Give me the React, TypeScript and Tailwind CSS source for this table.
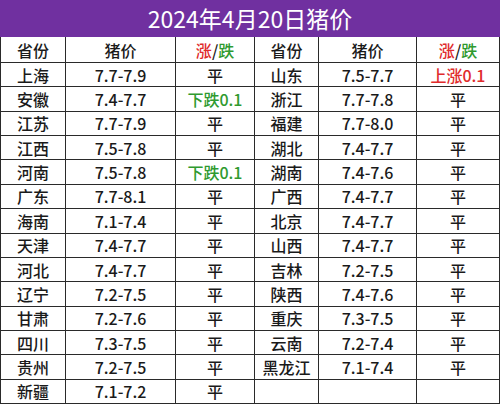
import React from 'react';

type Row = { province: string; price: string; change: string };

const left: Row[] = [
  { province: '上海', price: '7.7-7.9', change: '平' },
  { province: '安徽', price: '7.4-7.7', change: '下跌0.1' },
  { province: '江苏', price: '7.7-7.9', change: '平' },
  { province: '江西', price: '7.5-7.8', change: '平' },
  { province: '河南', price: '7.5-7.8', change: '下跌0.1' },
  { province: '广东', price: '7.7-8.1', change: '平' },
  { province: '海南', price: '7.1-7.4', change: '平' },
  { province: '天津', price: '7.4-7.7', change: '平' },
  { province: '河北', price: '7.4-7.7', change: '平' },
  { province: '辽宁', price: '7.2-7.5', change: '平' },
  { province: '甘肃', price: '7.2-7.6', change: '平' },
  { province: '四川', price: '7.3-7.5', change: '平' },
  { province: '贵州', price: '7.2-7.5', change: '平' },
  { province: '新疆', price: '7.1-7.2', change: '平' },
];

const right: Row[] = [
  { province: '山东', price: '7.5-7.7', change: '上涨0.1' },
  { province: '浙江', price: '7.7-7.8', change: '平' },
  { province: '福建', price: '7.7-8.0', change: '平' },
  { province: '湖北', price: '7.4-7.7', change: '平' },
  { province: '湖南', price: '7.4-7.6', change: '平' },
  { province: '广西', price: '7.4-7.7', change: '平' },
  { province: '北京', price: '7.4-7.7', change: '平' },
  { province: '山西', price: '7.4-7.7', change: '平' },
  { province: '吉林', price: '7.2-7.5', change: '平' },
  { province: '陕西', price: '7.4-7.6', change: '平' },
  { province: '重庆', price: '7.3-7.5', change: '平' },
  { province: '云南', price: '7.2-7.4', change: '平' },
  { province: '黑龙江', price: '7.1-7.4', change: '平' },
  { province: '', price: '', change: '' },
];

const changeColor = (c: string) =>
  c.startsWith('上涨') ? 'text-[#e02b2b]' : c.startsWith('下跌') ? 'text-[#2f9a2f]' : 'text-[#1a1a1a]';

const Cell: React.FC<{ children?: React.ReactNode; className?: string }> = ({ children, className = '' }) => (
  <div className={`bg-white flex items-center justify-center text-[16px] font-medium leading-none ${className}`}>
    {children}
  </div>
);

const HeaderCells = () => (
  <>
    <Cell>省份</Cell>
    <Cell>猪价</Cell>
    <Cell>
      <span className="text-[#e02b2b]">涨</span>/<span className="text-[#2f9a2f]">跌</span>
    </Cell>
  </>
);

export default function App() {
  return (
    <div
      className="w-[500px] h-[404px] flex flex-col bg-white text-[#1a1a1a]"
      style={{ fontFamily: '"Noto Sans CJK SC", "Noto Sans", sans-serif' }}
    >
      <div className="h-[37px] bg-[#7030a0] flex items-center justify-center text-white text-[23px] leading-none">
        2024年4月20日猪价
      </div>
      <div className="flex-1 grid grid-cols-[64px_109px_78px_63px_97px_82px] grid-rows-[25px_repeat(14,1fr)] gap-px p-px pt-0 bg-[#2a2a2a]">
        <HeaderCells />
        <HeaderCells />
        {left.map((row, i) => (
          <React.Fragment key={i}>
            <Cell>{row.province}</Cell>
            <Cell>{row.price}</Cell>
            <Cell className={changeColor(row.change)}>{row.change}</Cell>
            <Cell>{right[i].province}</Cell>
            <Cell>{right[i].price}</Cell>
            <Cell className={changeColor(right[i].change)}>{right[i].change}</Cell>
          </React.Fragment>
        ))}
      </div>
    </div>
  );
}
